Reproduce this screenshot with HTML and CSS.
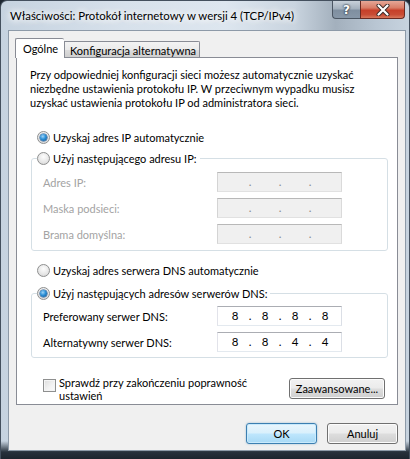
FILE: index.html
```html
<!DOCTYPE html>
<html lang="pl">
<head>
<meta charset="utf-8">
<title>Właściwości: Protokół internetowy w wersji 4 (TCP/IPv4)</title>
<link rel="stylesheet" href="styles.css">
</head>
<body>
<div class="window">
  <div class="titlebar">
    <span class="title">Właściwości: Protokół internetowy w wersji 4 (TCP/IPv4)</span>
    <div class="caption-buttons">
      <div class="cap help">?</div>
      <div class="cap close">
        <svg width="14" height="12" viewBox="0 0 14 12"><path d="M2.5 1.5 L11.5 10.5 M11.5 1.5 L2.5 10.5" stroke="#3a2a28" stroke-width="4" stroke-linecap="round"/><path d="M2.5 1.5 L11.5 10.5 M11.5 1.5 L2.5 10.5" stroke="#ffffff" stroke-width="2.2" stroke-linecap="round"/></svg>
      </div>
    </div>
  </div>
  <div class="client">
    <div class="tabs">
      <div class="tab active">Ogólne</div>
      <div class="tab">Konfiguracja alternatywna</div>
    </div>
    <div class="panel">
      <p class="intro">Przy odpowiedniej konfiguracji sieci możesz automatycznie uzyskać<br>niezbędne ustawienia protokołu IP. W przeciwnym wypadku musisz<br>uzyskać ustawienia protokołu IP od administratora sieci.</p>

      <div class="option first"><span class="radio checked"></span><span>Uzyskaj adres IP automatycznie</span></div>

      <fieldset class="group ipgroup">
        <legend><span class="radio"></span><span>Użyj następującego adresu IP:</span></legend>
        <div class="row disabled"><span class="lbl">Adres IP:</span><div class="ip"><span></span><span>.</span><span></span><span>.</span><span></span><span>.</span><span></span></div></div>
        <div class="row disabled"><span class="lbl">Maska podsieci:</span><div class="ip"><span></span><span>.</span><span></span><span>.</span><span></span><span>.</span><span></span></div></div>
        <div class="row disabled"><span class="lbl">Brama domyślna:</span><div class="ip"><span></span><span>.</span><span></span><span>.</span><span></span><span>.</span><span></span></div></div>
      </fieldset>

      <div class="option second"><span class="radio"></span><span>Uzyskaj adres serwera DNS automatycznie</span></div>

      <fieldset class="group dnsgroup">
        <legend><span class="radio checked"></span><span>Użyj następujących adresów serwerów DNS:</span></legend>
        <div class="row"><span class="lbl">Preferowany serwer DNS:</span><div class="ip"><span>8</span><span>.</span><span>8</span><span>.</span><span>8</span><span>.</span><span>8</span></div></div>
        <div class="row"><span class="lbl">Alternatywny serwer DNS:</span><div class="ip"><span>8</span><span>.</span><span>8</span><span>.</span><span>4</span><span>.</span><span>4</span></div></div>
      </fieldset>

      <div class="bottom-row">
        <div class="check"><span class="checkbox"></span><span class="check-text">Sprawdź przy zakończeniu poprawność<br>ustawień</span></div>
        <div class="btn advanced">Zaawansowane...</div>
      </div>
    </div>
    <div class="dialog-buttons">
      <div class="btn default">OK</div>
      <div class="btn">Anuluj</div>
    </div>
  </div>
</div>
</body>
</html>
```

FILE: styles.css
```css
* { box-sizing: border-box; }
html, body { margin: 0; padding: 0; background: #1d2631; }
body {
  font-family: Lato, "Noto Sans", sans-serif;
  font-size: 11px;
  color: #000;
}
.window {
  width: 410px;
  height: 459px;
  display: flex;
  flex-direction: column;
  border: 1px solid #44505e;
  border-bottom: none;
  border-radius: 7px 7px 0 0;
  background:
    linear-gradient(to bottom, rgba(0,0,0,0) 0, rgba(0,0,0,0) 440px, #27313c 451px, #1b232c 459px),
    linear-gradient(to right, #c6d3e0 0, #d7e1eb 30%, #dde6ef 55%, #c9d4df 72%, #a3b0bd 82%, #b9c6d3 92%, #c7d3df 100%);
  overflow: hidden;
}
.titlebar {
  height: 29px;
  display: flex;
  align-items: flex-start;
  flex: none;
}
.title {
  margin: 7px 0 0 9px;
  font-size: 11.4px;
  line-height: 15px;
  color: #000;
  text-shadow: 0 0 6px #fff, 0 0 8px #fff, 0 0 10px rgba(255,255,255,0.9);
  white-space: nowrap;
}
.caption-buttons {
  margin-left: auto;
  margin-right: 4px;
  display: flex;
  height: 18px;
}
.cap {
  height: 18px;
  display: flex;
  align-items: center;
  justify-content: center;
  border: 1px solid #4b5663;
  border-top: none;
}
.help {
  width: 28px;
  border-radius: 0 0 0 4px;
  border-right: none;
  background: linear-gradient(to bottom, #c8d1da 0, #a4b1be 45%, #7f8fa0 55%, #8797a8 100%);
  color: #fff;
  font-family: "DejaVu Sans", sans-serif;
  font-weight: bold;
  font-size: 12px;
  text-shadow: 0 0 2px #26313d, 0 0 2px #26313d;
}
.close {
  width: 45px;
  border-radius: 0 0 4px 0;
  border-color: #6a2a22;
  background: linear-gradient(to bottom, #e6a797 0, #d97d67 40%, #c7402a 55%, #c94c35 80%, #d8775c 100%);
}
.client {
  flex: 1;
  margin: 0 3px 8px 7px;
  border: 1px solid #8d9aa8;
  background: #f0f0f0;
  padding: 7px 7px 0 7px;
  display: flex;
  flex-direction: column;
}
.tabs {
  display: flex;
  align-items: flex-end;
  height: 19px;
  position: relative;
  z-index: 2;
}
.tab {
  border: 1px solid #898c95;
  border-bottom: none;
  font-size: 11px;
  line-height: 14px;
  white-space: nowrap;
}
.tab.active {
  background: #fff;
  height: 20px;
  margin-left: -1px;
  margin-bottom: -1px;
  padding: 3px 0 0 7px;
  width: 49px;
  border-right: none;
  border-radius: 2px 2px 0 0;
}
.tab:not(.active) {
  width: 136px;
  height: 16px;
  padding: 2px 0 0 5px;
  background: linear-gradient(to bottom, #f3f3f3 0, #ebebeb 50%, #dddddd 51%, #cfcfcf 100%);
  border-radius: 0 2px 0 0;
}
.panel {
  height: 348px;
  background: #fff;
  border: 1px solid #898c95;
  padding: 10px 10px 0 13px;
  display: flex;
  flex-direction: column;
}
.intro {
  margin: 0;
  line-height: 14px;
  font-size: 11px;
}
.option {
  display: flex;
  align-items: center;
  height: 16px;
  padding-left: 7px;
}
.option.first { margin-top: 19px; }
.option.second { margin-top: 11px; }
.radio {
  width: 13px;
  height: 13px;
  border-radius: 50%;
  border: 1px solid #8e8f8f;
  background: radial-gradient(circle at 50% 35%, #fdfdfd 0, #e6e6e6 60%, #cfcfcf 100%);
  margin-right: 3px;
  flex: none;
  display: flex;
  align-items: center;
  justify-content: center;
}
.radio.checked::after {
  content: "";
  width: 7px;
  height: 7px;
  border-radius: 50%;
  background: radial-gradient(circle at 40% 35%, #9fd4f7 0, #2b8fd6 45%, #114f8c 100%);
  box-shadow: 0 0 0 0.5px #1a4f86;
}
.group {
  margin: 5px 0 0 1px;
  width: 357px;
  border: 1px solid #d5dfe5;
  border-radius: 3px;
  padding: 0 0 6px 0;
}
.dnsgroup { margin-top: 7px; padding-bottom: 5px; }
legend {
  margin-left: 5px;
  padding: 0 3px 0 0;
  display: flex;
  align-items: center;
  height: 16px;
  background: #fff;
}
.row {
  display: flex;
  align-items: center;
  height: 20px;
  padding-left: 11px;
  margin-top: 6px;
}
.dnsgroup .row:first-of-type { margin-top: 5px; }
.lbl {
  width: 174px;
  flex: none;
}
.row.disabled .lbl { color: #a3a3a3; }
.ip {
  width: 125px;
  height: 20px;
  border: 1px solid;
  border-color: #abadb3 #dbdfe6 #e3e9ef #e2e3ea;
  background: #fff;
  display: grid;
  grid-template-columns: 26px 4px 26px 4px 26px 4px 26px;
  padding-left: 4px;
  align-items: center;
  font-size: 11.5px;
  line-height: 18px;
}
.ip span { text-align: center; }
.row.disabled .ip {
  background: #f0f0f0;
  border-color: #b8b8b8 #dadada #e1e1e1 #d4d4d4;
  color: #8a8a8a;
}
.bottom-row {
  display: flex;
  align-items: flex-start;
  margin-top: 20px;
}
.check {
  display: flex;
  align-items: flex-start;
  padding-left: 13px;
  flex: 1;
}
.checkbox {
  width: 13px;
  height: 13px;
  margin-top: 1px;
  border: 1px solid #8e8f8f;
  background: linear-gradient(135deg, #dcdcdc 0, #f3f3f3 60%, #fbfbfb 100%);
  box-shadow: inset 0 0 0 1px #f4f4f4;
  margin-right: 3px;
  flex: none;
}
.check-text { line-height: 13px; margin-top: -2px; }
.btn {
  height: 21px;
  border: 1px solid #707070;
  border-radius: 3px;
  background: linear-gradient(to bottom, #f2f2f2 0, #ebebeb 48%, #dddddd 52%, #cfcfcf 100%);
  box-shadow: inset 0 0 0 1px #fcfcfc;
  display: flex;
  align-items: center;
  justify-content: center;
  font-size: 11px;
  white-space: nowrap;
}
.advanced {
  width: 96px;
  margin-top: 0;
  margin-right: 2px;
}
.dialog-buttons {
  display: flex;
  justify-content: flex-end;
  gap: 10px;
  margin-top: 18px;
}
.dialog-buttons .btn { width: 71px; }
.btn.default {
  border-color: #3c7fb1;
  background: linear-gradient(to bottom, #eaf6fd 0, #d9f0fc 48%, #bee6fd 52%, #a7d9f5 100%);
  box-shadow: inset 0 0 0 1px #c9eafc, 0 0 2px rgba(60,127,177,0.5);
}
```
